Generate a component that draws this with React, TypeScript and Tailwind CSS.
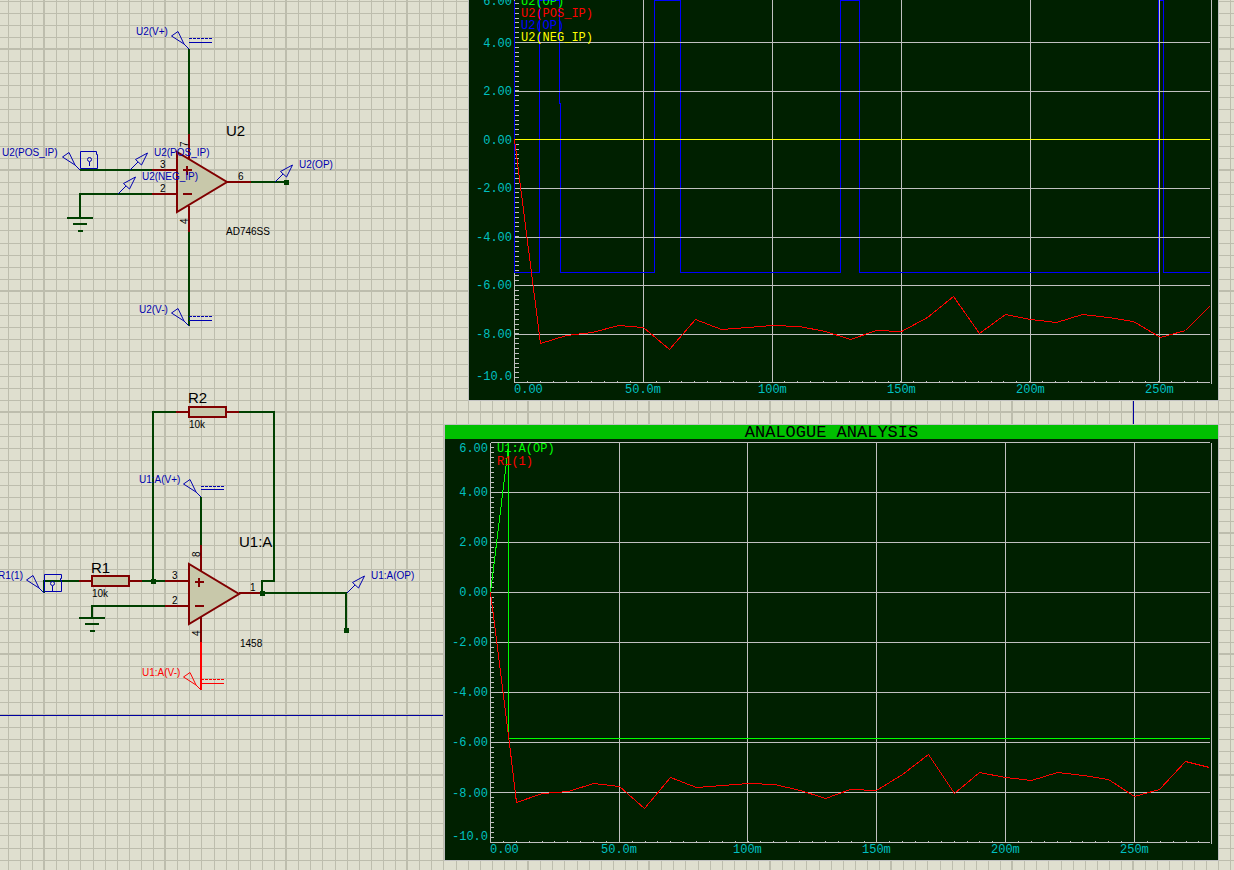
import type { ReactNode } from "react";

type Point = [number, number];

const SANS = "font-['Liberation_Sans',Arial,sans-serif]";
const MONO = "font-['Liberation_Mono','Courier_New',monospace]";

const WIRE = "#004000";
const PIN = "#800000";
const PROBE = "#0000b0";
const ALERT = "#ff0000";
const BODY = "#c8c8aa";

const toPoints = (points: Point[]) => points.map((p) => p.join(",")).join(" ");

/* ---------- sheet grid ---------- */

const COLUMN_OFFSETS = [12, 24, 36, 49, 61, 73, 85, 97, 109];
const ROW_OFFSETS = [12, 24, 36, 48, 60, 73, 85, 97, 109];

function SheetGrid() {
  return (
    <>
      <defs>
        <pattern id="sheet" x="43" y="48" width="121" height="121" patternUnits="userSpaceOnUse">
          <rect width="121" height="121" fill="#dfdfcf" />
          <g fill="#bdbdad">
            {COLUMN_OFFSETS.map((x) => (
              <rect key={x} x={x + 1} width="1" height="121" />
            ))}
            {ROW_OFFSETS.map((y) => (
              <rect key={y} y={y + 1} width="121" height="1" />
            ))}
            <rect width="2" height="121" />
            <rect width="121" height="2" />
          </g>
        </pattern>
      </defs>
      <rect width="100%" height="100%" fill="url(#sheet)" />
    </>
  );
}

/* ---------- schematic parts ---------- */

function Wire({ d, color = WIRE }: { d: string; color?: string }) {
  return <path d={d} fill="none" stroke={color} strokeWidth="2" shapeRendering="crispEdges" />;
}

function Junction({ x, y }: { x: number; y: number }) {
  return <rect x={x - 2} y={y - 2} width="5" height="5" fill={WIRE} />;
}

function Label({
  x,
  y,
  color = PROBE,
  large = false,
  children,
}: {
  x: number;
  y: number;
  color?: string;
  large?: boolean;
  children: ReactNode;
}) {
  return (
    <text x={x} y={y} fill={color} className={large ? "text-[15px]" : "text-[10px]"}>
      {children}
    </text>
  );
}

function SidePin({ x, y, children }: { x: number; y: number; children: ReactNode }) {
  return (
    <text transform={`translate(${x} ${y}) rotate(-90)`} fill="#000" className="text-[10px]">
      {children}
    </text>
  );
}

function Source({ x, y, color = PROBE }: { x: number; y: number; color?: string }) {
  return (
    <path
      transform={`translate(${x} ${y})`}
      d="M0 0 L-5 -5 M-5 -5 L-17.5 -13 L-11 -17.5 Z"
      fill="none"
      stroke={color}
      strokeWidth="1"
    />
  );
}

function Battery({ x, y, gap = 4, color = PROBE }: { x: number; y: number; gap?: number; color?: string }) {
  return (
    <g transform="translate(0 0.5)" stroke={color} strokeWidth="1" shapeRendering="crispEdges">
      <path d={`M${x} ${y} h23`} strokeDasharray="3 1" />
      <path d={`M${x} ${y + gap} h23`} />
    </g>
  );
}

function VoltageProbe({ x, y }: { x: number; y: number }) {
  return (
    <path
      transform={`translate(${x} ${y})`}
      d="M0 0 L8 -8 M5.5 -10.5 L17.5 -17 L11.5 -5 Z"
      fill="none"
      stroke={PROBE}
      strokeWidth="1"
    />
  );
}

function Ground({ x, y }: { x: number; y: number }) {
  return <Wire d={`M${x - 13} ${y} h26 M${x - 7} ${y + 6} h14 M${x - 2} ${y + 13} h5`} />;
}

function Resistor({ x, y }: { x: number; y: number }) {
  return (
    <>
      <Wire d={`M${x - 13} ${y} h13 M${x + 37} ${y} h13`} color={PIN} />
      <rect x={x} y={y - 5} width="37" height="10" fill={BODY} stroke={PIN} strokeWidth="2" />
    </>
  );
}

function OpAmp({ x, y }: { x: number; y: number }) {
  return (
    <>
      <path d={`M${x} ${y - 30} V${y + 30} L${x + 50} ${y} Z`} fill={BODY} stroke={PIN} strokeWidth="2" />
      <Wire d={`M${x + 6} ${y - 12} h9 M${x + 10} ${y - 16} v9 M${x + 6} ${y + 12} h9`} color={PIN} />
    </>
  );
}

function Schematic() {
  return (
    <svg
      role="img"
      aria-label="Op-amp schematic"
      className={`absolute inset-0 h-full w-full ${SANS}`}
    >
      <SheetGrid />

      <Wire d="M189 49 V134 M189 232 V326 M80 170 H152 M152 194 H80 V218 M251 182 H286" />
      <Ground x={80} y={218} />
      <OpAmp x={177} y={182} />
      <Wire d="M189 134 V159 M189 206 V232 M152 170 H177 M152 194 H177 M227 182 H251" color={PIN} />
      <Junction x={286} y={182} />
      <Source x={189} y={49} />
      <Battery x={189} y={38} />
      <Source x={189} y={326} />
      <Battery x={189} y={316} />
      <Source x={80} y={170} />
      <path
        d="M80.5 151.5 H96.5 V154.5 H97.5 V168.5 H80.5 Z M89.5 162 V166"
        fill="none"
        stroke={PROBE}
      />
      <circle cx="89.5" cy="159.5" r="2" fill="none" stroke={PROBE} />
      <VoltageProbe x={130} y={170} />
      <VoltageProbe x={118} y={194} />
      <VoltageProbe x={275} y={182} />
      <Label x={136} y={35}>U2(V+)</Label>
      <Label x={2} y={156}>U2(POS_IP)</Label>
      <Label x={154} y={156}>U2(POS_IP)</Label>
      <Label x={142} y={180}>U2(NEG_IP)</Label>
      <Label x={299} y={168}>U2(OP)</Label>
      <Label x={139} y={313}>U2(V-)</Label>
      <Label x={226} y={136} color="#000" large>U2</Label>
      <Label x={226} y={235} color="#000">AD746SS</Label>
      <Label x={160} y={168} color="#000">3</Label>
      <Label x={160} y={192} color="#000">2</Label>
      <Label x={238} y={180} color="#000">6</Label>
      <SidePin x={188} y={147}>7</SidePin>
      <SidePin x={188} y={224}>4</SidePin>

      <Wire d="M176 412 H153 V581 M238 412 H274 V581 H262 V593 H346 V630 M201 497 V545" />
      <Wire d="M44 593 V581 H80 M141 581 H165 M165 606 H92 V618" />
      <Ground x={92} y={618} />
      <Resistor x={189} y={412} />
      <Resistor x={92} y={581} />
      <OpAmp x={189} y={594} />
      <Wire d="M165 581 H189 M165 606 H189 M201 545 V571 M201 617 V642 M239 593 H261" color={PIN} />
      <Wire d="M201 642 V690" color={ALERT} />
      <Junction x={153} y={581} />
      <Junction x={262} y={593} />
      <Junction x={346} y={630} />
      <Source x={201} y={497} />
      <Battery x={201} y={486} gap={3} />
      <Source x={201} y={690} color={ALERT} />
      <Battery x={201} y={679} color={ALERT} />
      <Source x={44} y={593} />
      <path
        d="M44.5 574.5 H61.5 V578.5 H60.5 V580.5 H61.5 V591.5 H44.5 Z M52.5 586 V591"
        fill="none"
        stroke={PROBE}
      />
      <circle cx="52.5" cy="583.5" r="2" fill="none" stroke={PROBE} />
      <VoltageProbe x={347} y={593} />
      <Label x={188} y={403} color="#000" large>R2</Label>
      <Label x={189} y={428} color="#000">10k</Label>
      <Label x={91} y={573} color="#000" large>R1</Label>
      <Label x={92} y={597} color="#000">10k</Label>
      <Label x={239} y={547} color="#000" large>U1:A</Label>
      <Label x={240} y={647} color="#000">1458</Label>
      <Label x={139} y={483}>U1:A(V+)</Label>
      <Label x={142} y={676} color={ALERT}>U1:A(V-)</Label>
      <Label x={371} y={579}>U1:A(OP)</Label>
      <Label x={-2} y={579}>R1(1)</Label>
      <Label x={172} y={579} color="#000">3</Label>
      <Label x={172} y={604} color="#000">2</Label>
      <Label x={250} y={591} color="#000">1</Label>
      <SidePin x={200} y={557}>8</SidePin>
      <SidePin x={200} y={636}>4</SidePin>

      <rect y="715" width="443" height="1" fill="#0000a0" />
      <rect x="1133" y="401" width="1" height="23" fill="#0000a0" />
    </svg>
  );
}

/* ---------- graphs ---------- */

const TIME_LABELS = ["0.00", "50.0m", "100m", "150m", "200m", "250m"];

interface GraphProps {
  label: string;
  viewBox: string;
  left: number;
  top: number;
  bottom: number;
  rows: number[];
  columns: number[];
  tickStep: number;
  tickLength: number;
  levels: { y: number; text: string }[];
  legend: { y: number; text: string; color: string }[];
  behind?: ReactNode;
  children: ReactNode;
}

function Graph(props: GraphProps) {
  const { left, top, bottom, rows, columns, tickStep, tickLength } = props;
  const valueTicks = Array.from({ length: Math.floor((bottom - top) / tickStep) }, (_, i) =>
    Math.round(bottom - (i + 1) * tickStep),
  );
  const timeTicks = Array.from({ length: 55 }, (_, i) => Math.round(left + (i + 1) * 12.88)).filter(
    (x) => x < 1205,
  );
  return (
    <svg role="img" aria-label={props.label} viewBox={props.viewBox} className={`block w-full ${MONO}`}>
      <g transform="translate(0.5 0.5)" fill="none" strokeWidth="1" shapeRendering="crispEdges">
        {props.behind}
        <g stroke="#c0c0c0">
          {rows.map((y) => (
            <path key={y} d={`M${left} ${y} H1209`} />
          ))}
          {columns.map((x) => (
            <path key={x} d={`M${x} ${top - 1} V${bottom}`} />
          ))}
          <path d={`M${left} ${top} V${bottom} M1211 ${top} V${bottom + 1}`} />
          {valueTicks.map((y) => (
            <path key={y} d={`M${left} ${y} h${tickLength}`} />
          ))}
          {timeTicks.map((x) => (
            <path key={x} d={`M${x} ${bottom - 2} v2`} />
          ))}
        </g>
        {props.children}
      </g>
      <g fill="#00c0c0" className="text-[12px]">
        {props.levels.map((l) => (
          <text key={l.text} x={left - 2} y={l.y} textAnchor="end">
            {l.text}
          </text>
        ))}
        {TIME_LABELS.map((text, i) => (
          <text key={text} x={[left, ...columns.map((c, n) => c - (n === 0 ? 18 : 14))][i]} y={bottom + 11}>
            {text}
          </text>
        ))}
      </g>
      {props.legend.map((l) => (
        <text key={l.y} x={left + 7} y={l.y} fill={l.color} className="text-[12px]">
          {l.text}
        </text>
      ))}
    </svg>
  );
}

const INPUT_A: Point[] = [
  [514, 139], [540, 343], [566, 335], [592, 332], [618, 325], [643, 327], [669, 349], [695, 319],
  [721, 329], [747, 327], [772, 325], [799, 326], [825, 331], [850, 339], [876, 330], [901, 331],
  [927, 317], [953, 296], [979, 333], [1005, 314], [1030, 319], [1056, 322], [1082, 314],
  [1108, 317], [1133, 321], [1160, 337], [1185, 330], [1209, 306],
];

const INPUT_B: Point[] = [
  [490, 592], [508, 735], [516, 802], [542, 793], [568, 791], [593, 783], [619, 786], [644, 808],
  [670, 777], [696, 787], [722, 785], [748, 783], [774, 784], [800, 790], [825, 798], [850, 789],
  [876, 790], [902, 774], [928, 754], [954, 793], [979, 772], [1005, 777], [1031, 780],
  [1057, 772], [1083, 775], [1108, 779], [1134, 796], [1159, 789], [1185, 761], [1209, 767],
];

function ComparatorGraph() {
  return (
    <figure className="absolute top-0 right-[15px] left-[468px] border-x border-b border-[#c0c0c0] bg-[#002000]">
      <Graph
        label="U2 transient response"
        viewBox="469 0 749 400"
        left={514}
        top={-6}
        bottom={382}
        rows={[42, 91, 139, 188, 237, 285, 334, 382]}
        columns={[643, 772, 901, 1030, 1159]}
        tickStep={4.86}
        tickLength={4}
        levels={[
          { y: 5, text: "6.00" },
          { y: 47, text: "4.00" },
          { y: 95, text: "2.00" },
          { y: 144, text: "0.00" },
          { y: 192, text: "-2.00" },
          { y: 241, text: "-4.00" },
          { y: 289, text: "-6.00" },
          { y: 338, text: "-8.00" },
          { y: 380, text: "-10.0" },
        ]}
        legend={[
          { y: 5, text: "U2(OP)", color: "#00ff00" },
          { y: 17, text: "U2(POS_IP)", color: "#ff0000" },
          { y: 29, text: "U2(OP)", color: "#0000ff" },
          { y: 41, text: "U2(NEG_IP)", color: "#ffff00" },
        ]}
        behind={
          <path
            stroke="#0000ff"
            d="M539 272 V0 H559 V103 H560 V272 M654 272 V0 H680 V272 M840 272 V0 H859 V272 M1158 272 V0 H1163 V272"
          />
        }
      >
        <path stroke="#0000ff" d="M514 0 V272 H539 M560 272 H654 M680 272 H840 M859 272 H1158 M1163 272 H1209" />
        <polyline stroke="#ff0000" points={toPoints(INPUT_A)} />
        <path stroke="#ffff00" d="M514 139 H1209" />
      </Graph>
    </figure>
  );
}

function AnalogueGraph() {
  return (
    <figure className="absolute top-[424px] right-[15px] left-[444px] border border-[#c0c0c0] bg-[#002000]">
      <figcaption className="flex h-3.5 items-center justify-center bg-[#00c000] font-['Liberation_Mono','Courier_New',monospace] text-[17px] leading-none text-black">
        ANALOGUE ANALYSIS
      </figcaption>
      <Graph
        label="U1:A transient response"
        viewBox="445 439 773 421"
        left={490}
        top={442}
        bottom={842}
        rows={[442, 492, 542, 592, 642, 692, 742, 792, 842]}
        columns={[619, 747, 876, 1005, 1134]}
        tickStep={5}
        tickLength={3}
        levels={[
          { y: 452, text: "6.00" },
          { y: 496, text: "4.00" },
          { y: 546, text: "2.00" },
          { y: 596, text: "0.00" },
          { y: 646, text: "-2.00" },
          { y: 696, text: "-4.00" },
          { y: 746, text: "-6.00" },
          { y: 797, text: "-8.00" },
          { y: 840, text: "-10.0" },
        ]}
        legend={[
          { y: 452, text: "U1:A(OP)", color: "#00ff00" },
          { y: 465, text: "R1(1)", color: "#ff0000" },
        ]}
      >
        <path stroke="#00ff00" d="M490 592 L508 445 V738 H1209" />
        <polyline stroke="#ff0000" points={toPoints(INPUT_B)} />
      </Graph>
    </figure>
  );
}

export default function App() {
  return (
    <main className="relative h-screen min-h-[861px] overflow-hidden bg-[#dfdfcf]">
      <Schematic />
      <ComparatorGraph />
      <AnalogueGraph />
    </main>
  );
}
